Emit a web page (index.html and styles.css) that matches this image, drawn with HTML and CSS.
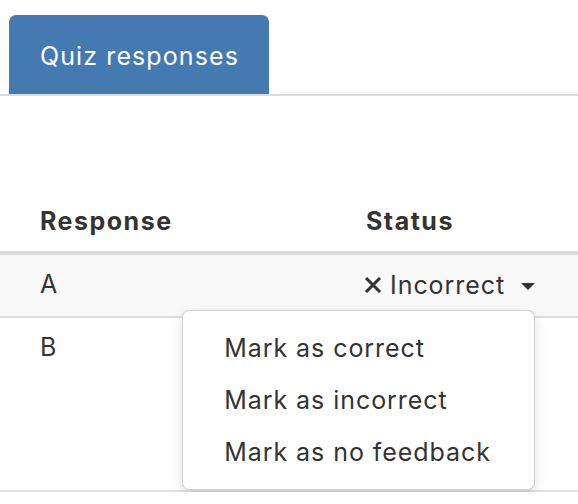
FILE: index.html
```html
<!DOCTYPE html>
<html>
<head>
<meta charset="utf-8">
<link rel="stylesheet" href="styles.css">
</head>
<body>
<div class="tabs">
  <div class="tab">Quiz responses</div>
</div>
<table class="responses">
  <thead>
    <tr><th class="col-resp">Response</th><th class="col-status">Status</th></tr>
  </thead>
  <tbody>
    <tr class="striped">
      <td class="col-resp">A</td>
      <td class="col-status">
        <div class="status-btn">
          <svg class="x-icon" viewBox="0 0 18 16" width="18" height="16"><path d="M2 1 L16 15 M16 1 L2 15" stroke="#333" stroke-width="3" fill="none"/></svg><span class="label">Incorrect</span><span class="caret"></span>
          <ul class="menu">
            <li>Mark as correct</li>
            <li>Mark as incorrect</li>
            <li>Mark as no feedback</li>
          </ul>
        </div>
      </td>
    </tr>
    <tr class="tall">
      <td class="col-resp">B</td>
      <td class="col-status"></td>
    </tr>
  </tbody>
</table>
</body>
</html>
```

FILE: styles.css
```css
html, body {
  margin: 0;
  padding: 0;
  background: #fff;
  font-family: "Inter", "Liberation Sans", sans-serif;
  color: #333;
}
.tabs {
  padding: 15px 0 0 9px;
  border-bottom: 2px solid #dcdcdc;
  display: flex;
}
.tab {
  background: #4479b2;
  color: #fff;
  font-size: 25px;
  letter-spacing: 1.1px;
  height: 79px;
  line-height: 82px;
  padding: 0 0 0 31px;
  border-radius: 7px 7px 0 0;
  width: 229px;
}
.responses {
  margin-top: 95px;
  width: 100%;
  border-collapse: collapse;
  font-size: 25px;
  letter-spacing: 0.95px;
}
.responses th, .responses td {
  padding: 16px 0 16px 40px;
  line-height: 28px;
  text-align: left;
  vertical-align: top;
}
.responses td {
  padding-top: 15px;
  padding-bottom: 17px;
}
.responses th {
  font-weight: 700;
  letter-spacing: 1.5px;
  border-bottom: 4px solid #dcdcdc;
}
.responses td {
  border-top: 2px solid #dedede;
}
.col-resp { width: 286px; }
.striped td { background: #f9f9f9; }
.tall td { height: 140px; border-bottom: 2px solid #e2e2e2; }
.status-btn {
  position: relative;
  display: inline-flex;
  align-items: center;
  margin-left: -2px;
}
.x-icon { margin-right: 8px; }
.caret {
  display: inline-block;
  width: 0;
  height: 0;
  border-left: 7px solid transparent;
  border-right: 7px solid transparent;
  border-top: 7px solid #333;
  margin-left: 16px;
  margin-top: 2px;
}
.menu {
  position: absolute;
  right: 0;
  top: 39px;
  width: 351px;
  margin: 0;
  padding: 11px 0;
  list-style: none;
  background: #fff;
  border: 1px solid rgba(0,0,0,0.18);
  border-radius: 7px;
  box-shadow: 0 6px 14px rgba(0,0,0,0.12);
  z-index: 5;
}
.menu li {
  padding: 0 0 0 41px;
  height: 52px;
  line-height: 52px;
  white-space: nowrap;
}
```
